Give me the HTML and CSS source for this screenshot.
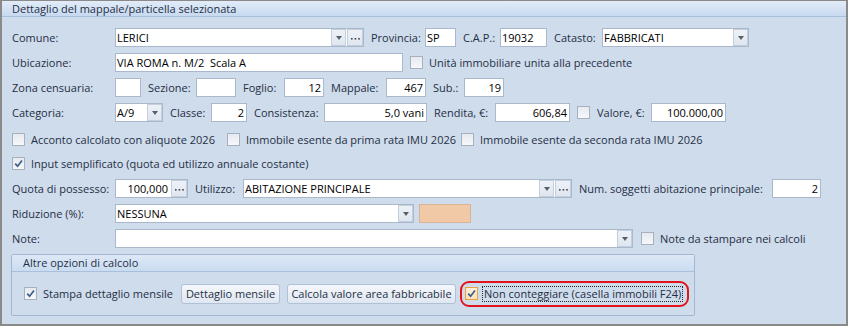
FILE: index.html
```html
<!DOCTYPE html>
<html lang="it">
<head>
    <meta charset="UTF-8">
    <title>Dettaglio del mappale</title>
    <link rel="stylesheet" href="styles.css">
</head>
<body>
    <div class="panel">
        <div class="panel-title">Dettaglio del mappale/particella selezionata</div>
        <div class="panel-body">

            <div class="row">
                <span class="lbl first">Comune:</span>
                <div class="edit w-comune"><span class="val">LERICI</span><span class="dd"></span><span class="dots"><svg width="9" height="2"><rect x="0" y="0" width="1.6" height="1.6"/><rect x="3.6" y="0" width="1.6" height="1.6"/><rect x="7.2" y="0" width="1.6" height="1.6"/></svg></span></div>
                <span class="lbl l-61">Provincia:</span>
                <div class="edit w-sp"><span class="val">SP</span></div>
                <span class="lbl l-44">C.A.P.:</span>
                <div class="edit w-cap"><span class="val">19032</span></div>
                <span class="lbl l-55">Catasto:</span>
                <div class="edit w-catasto"><span class="val">FABBRICATI</span><span class="dd"></span></div>
            </div>

            <div class="row">
                <span class="lbl first">Ubicazione:</span>
                <div class="edit w-ubic"><span class="val">VIA ROMA n. M/2&nbsp; Scala A</span></div>
                <span class="chk ml-7"></span>
                <span class="chk-text">Unità immobiliare unita alla precedente</span>
            </div>

            <div class="row">
                <span class="lbl first">Zona censuaria:</span>
                <div class="edit w-zona"></div>
                <span class="lbl l-55">Sezione:</span>
                <div class="edit w-40"></div>
                <span class="lbl l-48">Foglio:</span>
                <div class="edit w-40"><span class="val num">12</span></div>
                <span class="lbl l-62">Mappale:</span>
                <div class="edit w-40"><span class="val num">467</span></div>
                <span class="lbl l-38">Sub.:</span>
                <div class="edit w-40"><span class="val num">19</span></div>
            </div>

            <div class="row">
                <span class="lbl first">Categoria:</span>
                <div class="edit w-cat"><span class="val">A/9</span><span class="dd"></span></div>
                <span class="lbl l-48">Classe:</span>
                <div class="edit w-classe"><span class="val num">2</span></div>
                <span class="lbl l-77">Consistenza:</span>
                <div class="edit w-cons"><span class="val num">5,0 vani</span></div>
                <span class="lbl l-68">Rendita, €:</span>
                <div class="edit w-75"><span class="val num">606,84</span></div>
                <span class="chk ml-7"></span>
                <span class="lbl l-61">Valore, €:</span>
                <div class="edit w-75"><span class="val num">100.000,00</span></div>
            </div>

            <div class="row row-check">
                <div class="check-item c-215"><span class="chk"></span><span class="chk-text">Acconto calcolato con aliquote 2026</span></div>
                <div class="check-item c-234"><span class="chk"></span><span class="chk-text">Immobile esente da prima rata IMU 2026</span></div>
                <div class="check-item"><span class="chk"></span><span class="chk-text">Immobile esente da seconda rata IMU 2026</span></div>
            </div>

            <div class="row row-check last">
                <div class="check-item"><span class="chk on"><svg width="11" height="11"><path d="M2.2 5.6 L4.6 8.2 L9 2.4"/></svg></span><span class="chk-text">Input semplificato (quota ed utilizzo annuale costante)</span></div>
            </div>

            <div class="row">
                <span class="lbl first">Quota di possesso:</span>
                <div class="edit w-quota"><span class="val num">100,000</span><span class="dots"><svg width="9" height="2"><rect x="0" y="0" width="1.6" height="1.6"/><rect x="3.6" y="0" width="1.6" height="1.6"/><rect x="7.2" y="0" width="1.6" height="1.6"/></svg></span></div>
                <span class="lbl l-55">Utilizzo:</span>
                <div class="edit w-util"><span class="val">ABITAZIONE PRINCIPALE</span><span class="dd"></span><span class="dots"><svg width="9" height="2"><rect x="0" y="0" width="1.6" height="1.6"/><rect x="3.6" y="0" width="1.6" height="1.6"/><rect x="7.2" y="0" width="1.6" height="1.6"/></svg></span></div>
                <span class="lbl l-200">Num. soggetti abitazione principale:</span>
                <div class="edit w-num"><span class="val num">2</span></div>
            </div>

            <div class="row">
                <span class="lbl first">Riduzione (%):</span>
                <div class="edit w-rid"><span class="val">NESSUNA</span><span class="dd"></span></div>
                <div class="swatch"></div>
            </div>

            <div class="row">
                <span class="lbl first">Note:</span>
                <div class="edit w-note"><span class="val"></span><span class="dd"></span></div>
                <span class="chk ml-8"></span>
                <span class="chk-text">Note da stampare nei calcoli</span>
            </div>

            <div class="group">
                <div class="group-title">Altre opzioni di calcolo</div>
                <div class="group-body">
                    <div class="check-item c-157"><span class="chk on"><svg width="11" height="11"><path d="M2.2 5.6 L4.6 8.2 L9 2.4"/></svg></span><span class="chk-text">Stampa dettaglio mensile</span></div>
                    <button class="btn w-btn1">Dettaglio mensile</button>
                    <button class="btn w-btn2">Calcola valore area fabbricabile</button>
                    <div class="highlight">
                        <span class="chk on focus"><svg width="11" height="11"><path d="M2.2 5.6 L4.6 8.2 L9 2.4"/></svg></span>
                        <span class="focus-text">Non conteggiare (casella immobili F24)</span>
                    </div>
                </div>
            </div>

        </div>
    </div>
</body>
</html>
```
FILE: styles.css
```css
body {
    margin: 0;
    background: #ffffff;
    font-family: "Open Sans", "Noto Sans", sans-serif;
    font-size: 11px;
    color: #1f2f44;
}

.panel {
    width: 848px;
    height: 326px;
    box-sizing: border-box;
    border: 2px solid #8a8a8a;
    border-top-width: 1px;
    background: #cfdcec;
}

.panel-title {
    height: 15px;
    line-height: 15px;
    padding-left: 10px;
    background: linear-gradient(#e2ecf8, #c7d9f0);
    border-bottom: 1px solid #a8bfdc;
}

.panel-body {
    padding: 11px 10px 0 10px;
}

.row {
    display: flex;
    align-items: center;
    height: 19px;
    margin-bottom: 6px;
}

.row-check {
    height: 22px;
    margin-bottom: 2px;
}

.row-check.last {
    margin-bottom: 5px;
}

.lbl {
    box-sizing: border-box;
    padding-left: 7px;
    white-space: nowrap;
}

.lbl.first {
    width: 103px;
    padding-left: 0;
}

/* label widths: gap from the previous control to the next one */
.l-38 { width: 38px; }
.l-44 { width: 44px; }
.l-48 { width: 48px; }
.l-55 { width: 55px; }
.l-61 { width: 61px; }
.l-62 { width: 62px; }
.l-68 { width: 68px; }
.l-77 { width: 77px; }
.l-200 { width: 200px; }

/* editors */
.edit {
    box-sizing: border-box;
    height: 19px;
    display: flex;
    align-items: stretch;
    background: #ffffff;
    border: 1px solid #a9b8cb;
    color: #000000;
}

.val {
    flex: 1;
    line-height: 17px;
    padding: 0 2px 0 1px;
    white-space: nowrap;
    overflow: hidden;
}

.val.num {
    text-align: right;
}

.dd, .dots {
    width: 15px;
    margin: 0 0 0 1px;
    box-sizing: border-box;
    border: 1px solid #c3cfdd;
    background: linear-gradient(#eef2f7, #dfe6ef);
    display: flex;
    align-items: center;
    justify-content: center;
}

.dots {
    width: 16px;
}

.dd::after {
    content: "";
    border-left: 3.5px solid transparent;
    border-right: 3.5px solid transparent;
    border-top: 4px solid #56606c;
    margin-top: 1px;
}

.dots svg {
    fill: #3e4854;
    margin-top: 2px;
}

.w-comune { width: 249px; }
.w-sp { width: 31px; }
.w-cap { width: 47px; }
.w-catasto { width: 147px; }
.w-ubic { width: 288px; }
.w-zona { width: 26px; }
.w-40 { width: 40px; }
.w-cat { width: 48px; }
.w-classe { width: 36px; }
.w-cons { width: 103px; }
.w-75 { width: 75px; }
.w-quota { width: 73px; }
.w-util { width: 329px; }
.w-num { width: 49px; }
.w-rid { width: 299px; }
.w-note { width: 518px; }

.swatch {
    box-sizing: border-box;
    width: 52px;
    height: 19px;
    margin-left: 5px;
    background: #f1c9a7;
    border: 1px solid #d8b496;
}

/* checkboxes */
.check-item {
    display: flex;
    align-items: center;
    white-space: nowrap;
}

.c-157 { width: 157px; }
.c-215 { width: 215px; }
.c-234 { width: 234px; }

.chk {
    box-sizing: border-box;
    flex: none;
    width: 13px;
    height: 13px;
    border: 1px solid #a7b1be;
    background: linear-gradient(#e6eaf0, #f6f8fa);
    display: flex;
    align-items: center;
    justify-content: center;
}

.chk svg path {
    fill: none;
    stroke: #3f5f8a;
    stroke-width: 1.7;
}

.chk.focus {
    border-color: #e8a33a;
    background: linear-gradient(#fdf0dc, #fbe2bd);
}

.chk-text {
    margin-left: 6px;
    white-space: nowrap;
}

.ml-7 { margin-left: 7px; }
.ml-8 { margin-left: 8px; }

/* group */
.group {
    box-sizing: border-box;
    width: 684px;
    height: 62px;
    margin-left: -1px;
    border: 1px solid #a3b7d2;
    border-radius: 2px;
}

.group-title {
    height: 16px;
    line-height: 16px;
    padding-left: 11px;
    background: linear-gradient(#dde8f6, #cadcf1);
    border-bottom: 1px solid #a9bfdc;
}

.group-body {
    height: 43px;
    display: flex;
    align-items: center;
    padding-left: 12px;
}

.btn {
    box-sizing: border-box;
    height: 20px;
    padding: 0;
    margin-right: 7px;
    font-family: inherit;
    font-size: 11px;
    color: #1f2f44;
    background: linear-gradient(#f4f7fb, #dfe7f1);
    border: 1px solid #b0c0d6;
    border-radius: 3px;
}

.w-btn1 { width: 99px; }
.w-btn2 { width: 169px; margin-right: 4px; }

.highlight {
    box-sizing: border-box;
    width: 229px;
    height: 26px;
    display: flex;
    align-items: center;
    padding-left: 3px;
    border: 2px solid #e3141c;
    border-radius: 9px;
}

.focus-text {
    margin-left: 4px;
    padding: 0 1px;
    line-height: 14px;
    border: 1px dotted #2a2a2a;
    white-space: nowrap;
}
```
